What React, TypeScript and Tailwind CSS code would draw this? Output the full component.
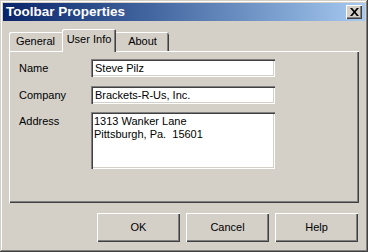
const raised = "shadow-[inset_1px_1px_#ffffff,inset_-1px_-1px_#404040,inset_-2px_-2px_#808080]";
const sunken = "bg-white shadow-[inset_1px_1px_#808080,inset_2px_2px_#404040,inset_-1px_-1px_#ffffff,inset_-2px_-2px_#d4d0c8]";

function Field({ label, value }: { label: string; value: string }) {
    return (
        <div className="flex items-center h-[18px]">
            <div className="w-[72px] leading-[13px]">{label}</div>
            <div className={`w-[184px] h-[18px] pl-[4px] flex items-center leading-[13px] ${sunken}`}>{value}</div>
        </div>
    );
}

export default function App() {
    return (
        <div className="w-[368px] h-[252px] bg-[#d4d0c8] p-[3px] flex flex-col text-[11px] text-black font-['Liberation_Sans',Arial,sans-serif] shadow-[inset_-1px_-1px_#404040,inset_1px_1px_#d4d0c8,inset_-2px_-2px_#808080,inset_2px_2px_#ffffff]">
            {/* Title bar */}
            <div className="h-[18px] flex items-center justify-between pl-[3px] pr-[3px] bg-linear-to-r from-[#0a246a] to-[#a6caf0]">
                <span className="text-white font-bold text-[13.5px] leading-none">Toolbar Properties</span>
                <div className={`w-[16px] h-[14px] bg-[#d4d0c8] flex items-center justify-center ${raised}`}>
                    <svg width="9" height="8" viewBox="0 0 9 8">
                        <path d="M0 0h2.2l2.3 2.8L6.8 0H9L5.6 4 9 8H6.8L4.5 5.2 2.2 8H0l3.4-4z" fill="#000" />
                    </svg>
                </div>
            </div>

            <div className="flex-1 flex flex-col px-[6px] pt-[8px]">
                {/* Tabs */}
                <div className="flex items-end h-[22px] relative z-10">
                    <div className="w-[53px] h-[19px] flex items-center justify-center rounded-tl-[2px] shadow-[inset_1px_1px_#ffffff]">General</div>
                    <div className="w-[54px] h-[23px] -mb-[1px] pb-[3px] bg-[#d4d0c8] flex items-center justify-center rounded-t-[2px] shadow-[inset_1px_1px_#ffffff,inset_-1px_0_#404040,inset_-2px_0_#808080]">User Info</div>
                    <div className="w-[53px] h-[19px] flex items-center justify-center rounded-tr-[2px] shadow-[inset_0_1px_#ffffff,inset_-1px_0_#404040,inset_-2px_0_#808080]">About</div>
                </div>

                {/* Panel */}
                <div className={`h-[152px] pt-[8px] pl-[10px] ${raised}`}>
                    <Field label="Name" value="Steve Pilz" />
                    <div className="mt-[9px]">
                        <Field label="Company" value="Brackets-R-Us, Inc." />
                    </div>
                    <div className="mt-[8px] flex items-start">
                        <div className="w-[72px] pt-[3px] leading-[13px]">Address</div>
                        <div className={`w-[184px] h-[57px] pt-[3px] pl-[3px] leading-[13px] whitespace-pre ${sunken}`}>
                            {"1313 Wanker Lane\nPittsburgh, Pa.  15601"}
                        </div>
                    </div>
                </div>

                {/* Buttons */}
                <div className="mt-[10px] flex justify-end gap-[6px] pr-[1px]">
                    {["OK", "Cancel", "Help"].map((b) => (
                        <div key={b} className={`w-[83px] h-[29px] flex items-center justify-center ${raised}`}>{b}</div>
                    ))}
                </div>
            </div>
        </div>
    );
}
